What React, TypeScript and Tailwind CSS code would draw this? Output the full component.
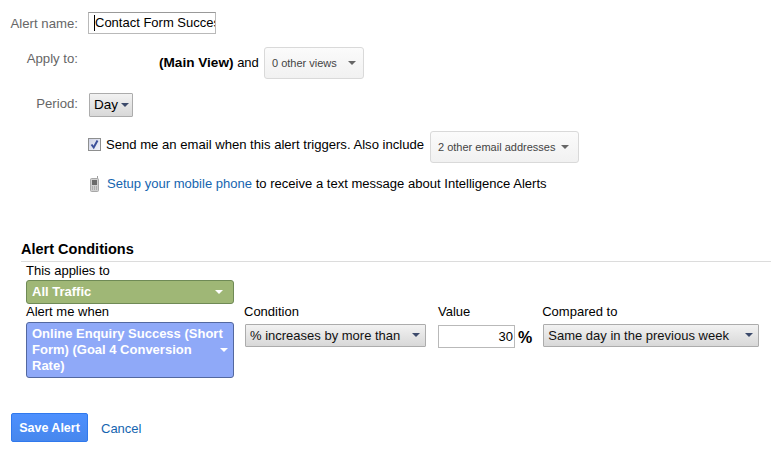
function Caret({ className }: { className: string }) {
  return <span className={`h-0 w-0 shrink-0 border-x-[4px] border-t-[4px] border-x-transparent ${className}`} />
}

function GrayButton({ label, className }: { label: string; className: string }) {
  return (
    <div className={`flex items-center justify-between rounded-[3px] border border-[#d9d9d9] bg-gradient-to-b from-[#fbfbfb] to-[#f1f1f1] pl-[7px] text-[11px] whitespace-nowrap text-[#444] ${className}`}>
      <span>{label}</span>
      <Caret className="border-t-[#666]" />
    </div>
  )
}

function NativeSelect({ label, className }: { label: string; className: string }) {
  return (
    <div className={`flex h-[23px] items-center justify-between rounded-[1px] border border-[#acacac] bg-gradient-to-b from-[#f2f2f2] to-[#d8d8d8] pl-[4px] pr-[5px] text-[13px] whitespace-nowrap text-[#111] ${className}`}>
      <span className="pt-[2px]">{label}</span>
      <Caret className="border-t-[#3c4a6b]" />
    </div>
  )
}

function RuleBox({ className, children }: { className: string; children: React.ReactNode }) {
  return (
    <div className={`flex w-[208px] items-center justify-between rounded-[3px] border pl-[5px] pr-[10px] text-[13px] font-bold leading-[16px] text-white ${className}`}>
      {children}
      <Caret className="border-t-white" />
    </div>
  )
}

export default function App() {
  return (
    <div className="h-[450px] w-[771px] overflow-hidden bg-white font-['Liberation_Sans',Arial,sans-serif] text-[13px] text-black">
      <div className="pt-[12px]">
        <div className="flex items-center">
          <div className="w-[78px] pt-[2px] text-right text-[13.2px] text-[#666]">Alert name:</div>
          <div className="ml-[10px] flex h-[22px] w-[128px] items-center overflow-hidden border border-[#b9b9b9] border-t-[#999] pl-[5px] text-[13px] whitespace-nowrap">
            <span className="h-[16px] w-px shrink-0 bg-black" />
            <span>Contact Form Success</span>
          </div>
        </div>

        <div className="mt-[13px] flex">
          <div className="w-[78px] pt-[2px] text-right text-[13.2px] text-[#666]">Apply to:</div>
          <div className="ml-[81px] w-[100px] pt-[6px] whitespace-nowrap"><b className="text-[13.6px]">(Main View)</b> and</div>
          <GrayButton label="0 other views" className="ml-[5px] h-[32px] w-[100px] pr-[7px]" />
        </div>

        <div className="mt-[14px] flex items-center">
          <div className="mb-[2px] w-[78px] text-right text-[13.2px] text-[#666]">Period:</div>
          <div className="ml-[11px] flex h-[24px] w-[44px] items-center gap-[3px] rounded-[1px] border border-[#acacac] bg-gradient-to-b from-[#f2f2f2] to-[#d8d8d8] pl-[4px] text-[13.5px]">
            Day
            <Caret className="border-t-[#3c4a6b]" />
          </div>
        </div>

        <div className="mt-[14px] ml-[88px] flex items-center">
          <div className="mb-[6px] flex h-[13px] w-[13px] items-center justify-center border border-[#8e8f8f] bg-gradient-to-br from-[#cfd3e6] to-[#f2f3fa]">
            <svg viewBox="0 0 11 11" className="h-[11px] w-[11px]">
              <path d="M2.5 5.5 L4.7 8.5 L8.5 1.5" fill="none" stroke="#3b4f9a" strokeWidth="2" />
            </svg>
          </div>
          <div className="mb-[4px] ml-[5px] w-[320px] text-[13.1px] whitespace-nowrap">Send me an email when this alert triggers. Also include</div>
          <GrayButton label="2 other email addresses" className="ml-[4px] h-[32px] w-[149px] pr-[9px]" />
        </div>

        <div className="mt-[11px] ml-[90px] flex items-center">
          <svg viewBox="0 0 9 16" className="h-[16px] w-[9px]">
            <rect x="7" y="0" width="1" height="3" fill="#a0a0a0" />
            <rect x="0.5" y="2.5" width="8" height="13" rx="1" fill="#cfcfcf" stroke="#a8a8a8" />
            <rect x="2" y="4" width="5" height="5" fill="#6a6a6a" />
            <path d="M2 11h1M4 11h1M6 11h1M2 13h1M4 13h1M6 13h1" stroke="#8a8a8a" />
          </svg>
          <div className="ml-[8px] text-[13.05px] whitespace-nowrap">
            <span className="text-[#1565b0]">Setup your mobile phone</span> to receive a text message about Intelligence Alerts
          </div>
        </div>
      </div>

      <div className="mt-[47px] ml-[21px] border-b border-[#dcdcdc] pb-[3px] text-[14.5px] leading-[17px] font-bold">Alert Conditions</div>

      <div className="ml-[26px]">
        <div className="leading-[17px]">This applies to</div>
        <RuleBox className="mt-[1px] h-[24px] border-[#6f8a56] bg-[#9fb776]">
          <span className="pt-[1px]">All Traffic</span>
        </RuleBox>

        <div className="flex">
          <div>
            <div className="leading-[15px]">Alert me when</div>
            <RuleBox className="mt-[3px] h-[56px] border-[#53689f] bg-[#8fa9f8]">
              <span className="-mr-[8px] w-[196px] shrink-0 pt-[1px]">
                Online Enquiry Success (Short
                <br />
                Form) (Goal 4 Conversion
                <br />
                Rate)
              </span>
            </RuleBox>
          </div>

          <div className="ml-[10px]">
            <div className="leading-[15px]">Condition</div>
            <NativeSelect label="% increases by more than" className="mt-[5px] ml-[1px] w-[181px]" />
          </div>

          <div className="ml-[12px]">
            <div className="leading-[15px]">Value</div>
            <div className="mt-[5px] flex items-center">
              <div className="flex h-[23px] w-[77px] items-center justify-end border border-[#b9b9b9] pt-[1px] pr-[1px]">30</div>
              <span className="ml-[3px] pt-[2px] text-[16px] font-bold">%</span>
            </div>
          </div>

          <div className="ml-[10px]">
            <div className="leading-[15px]">Compared to</div>
            <NativeSelect label="Same day in the previous week" className="mt-[5px] ml-[1px] w-[216px]" />
          </div>
        </div>
      </div>

      <div className="mt-[35px] ml-[11px] flex items-center">
        <div className="flex h-[29px] w-[77px] items-center justify-center rounded-[2px] border border-[#3079ed] bg-gradient-to-b from-[#4d90fe] to-[#4787ed] pt-[2px] text-[12.5px] font-bold text-white">Save Alert</div>
        <div className="mt-[3px] ml-[13px] text-[#1565b0]">Cancel</div>
      </div>
    </div>
  )
}
